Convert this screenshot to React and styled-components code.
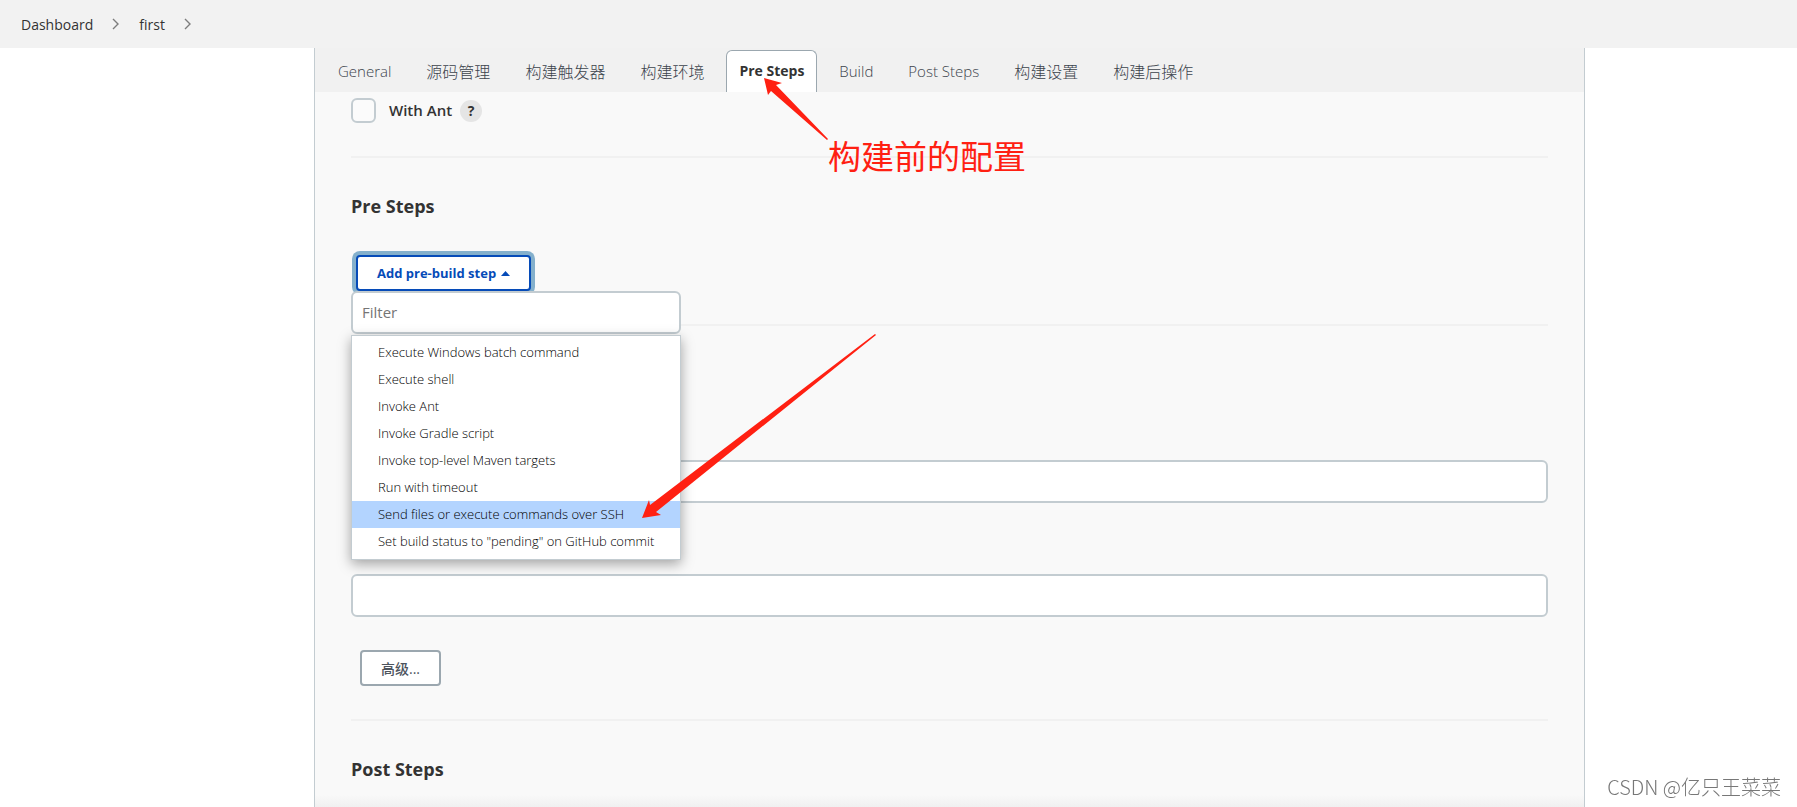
import React, { useState } from "react";
import styled, { createGlobalStyle } from "styled-components";

const GlobalStyle = createGlobalStyle`
  *, *::before, *::after {
    box-sizing: border-box;
  }

  body {
    margin: 0;
    background: #fff;
    color: #333;
    font-family: "Open Sans", "Noto Sans CJK SC", sans-serif;
    font-size: 15px;
  }

  button, input {
    font-family: inherit;
  }
`;

const Breadcrumbs = styled.nav`
  display: flex;
  align-items: center;
  gap: 17px;
  height: 48px;
  padding: 0 21px;
  background: #f2f2f2;
`;

const Crumb = styled.a`
  color: #333;
  font-size: 14px;
  font-weight: 500;
  text-decoration: none;
`;

const Chevron = styled.svg`
  width: 12px;
  height: 12px;
  fill: none;
  stroke: #7d7d7d;
  stroke-width: 1.4;
`;

const Panel = styled.main`
  position: relative;
  display: flex;
  flex-direction: column;
  min-height: calc(100vh - 48px);
  margin: 0 212px 0 314px;
  border: 1px solid #c3ccd1;
  border-width: 0 1px;
  background: #f9f9f9;
`;

const TabBar = styled.div`
  display: flex;
  align-items: flex-end;
  gap: 9px;
  height: 44px;
  padding: 0 10px;
  background: #f1f1f1;
`;

const Tab = styled.button`
  height: 42px;
  padding: 0 12px 2px;
  border: 1px solid ${(props) => (props.$active ? "#9ba7af" : "transparent")};
  border-bottom: 0;
  border-radius: 6px 6px 0 0;
  background: ${(props) => (props.$active ? "#fff" : "transparent")};
  color: ${(props) => (props.$active ? "#333" : "#3c434c")};
  font-size: ${(props) => (props.$cjk ? 16 : props.$active ? 14 : 15)}px;
  font-weight: ${(props) => (props.$active ? 700 : 300)};
  white-space: nowrap;
`;

const Section = styled.section`
  margin: 0 36px;
  padding: ${(props) => props.$top || 34}px 0 33px;
  border-bottom: 2px solid #f1f1f1;

  &:last-of-type {
    border-bottom: 0;
    padding-bottom: 0;
  }
`;

const CheckRow = styled.div`
  display: flex;
  align-items: center;
  height: 25px;
`;

const Checkbox = styled.input`
  appearance: none;
  width: 25px;
  height: 25px;
  margin: 0 13px 0 0;
  border: 2px solid #c3ccd1;
  border-radius: 6px;
  background: #fbfbfb;
`;

const CheckLabel = styled.label`
  padding-bottom: 2px;
  font-size: 15px;
  font-weight: 600;
`;

const Help = styled.button`
  width: 22px;
  height: 22px;
  margin-left: 8px;
  padding: 0;
  border: 0;
  border-radius: 50%;
  background: #e5e5e5;
  color: #333;
  font-size: 14px;
  font-weight: 700;
  line-height: 22px;
`;

const Title = styled.h2`
  margin: 0;
  font-size: 18px;
  font-weight: 700;
  line-height: 28px;
`;

const StepPicker = styled.div`
  position: relative;
  margin-top: 35px;
`;

const StepButton = styled.button`
  display: flex;
  align-items: center;
  gap: 5px;
  height: 36px;
  margin-left: 5px;
  padding: 0 19px;
  border: 2px solid #064bb8;
  border-radius: 4px;
  background: #fff;
  box-shadow: 0 0 0 4px #84b0cc;
  color: #064bb8;
  font-size: 13px;
  font-weight: 700;
`;

const Caret = styled.svg`
  width: 9px;
  height: 5px;
  fill: currentColor;
`;

const Dropdown = styled.div`
  position: absolute;
  top: 100%;
  left: 0;
  z-index: 2;
  width: 330px;
`;

const TextInput = styled.input`
  display: block;
  width: 100%;
  height: 43px;
  padding: 0 9px 2px;
  border: 2px solid #c3ccd1;
  border-radius: 6px;
  background: #fff;
  color: #333;
  font-size: 15px;

  &::placeholder {
    color: #757575;
  }
`;

const Menu = styled.ul`
  position: relative;
  margin: 1px 0 0;
  padding: 3px 0 4px;
  border: 1px solid #c3ccd1;
  background: #fff;
  box-shadow: 0 4px 12px rgba(0, 0, 0, 0.35);
  list-style: none;
`;

const MenuItem = styled.button`
  display: block;
  width: 100%;
  height: 27px;
  padding: 0 26px 2px;
  border: 0;
  background: ${(props) => (props.$selected ? "#b3d4ff" : "transparent")};
  color: #000;
  font-size: 13px;
  font-weight: 300;
  text-align: left;
  white-space: nowrap;
`;

const Fields = styled.div`
  display: flex;
  flex-direction: column;
  gap: 71px;
`;

const AdvancedButton = styled.button`
  height: 36px;
  margin: 33px 0 0 9px;
  padding: 0 19px;
  border: 2px solid #9ba7af;
  border-radius: 4px;
  background: #fff;
  color: #4d545d;
  font-size: 14px;
  font-weight: 500;
`;

const BottomShade = styled.div`
  position: sticky;
  bottom: 0;
  height: 12px;
  margin-top: auto;
  background: linear-gradient(rgba(240, 240, 240, 0), #f0f0f0);
`;

const Note = styled.p`
  position: absolute;
  top: 85px;
  left: 513px;
  z-index: 3;
  margin: 0;
  color: #ff2012;
  font-size: 33px;
  font-weight: 400;
  line-height: 48px;
  white-space: nowrap;
`;

const Arrows = styled.svg`
  position: absolute;
  top: 0;
  left: 0;
  z-index: 3;
  width: 600px;
  height: 500px;
  fill: #ff2012;
  pointer-events: none;
`;

const Watermark = styled.div`
  position: fixed;
  right: 16px;
  bottom: 5px;
  color: #777;
  font-family: "Noto Sans CJK SC", sans-serif;
  font-size: 20px;
  font-weight: 300;
  line-height: 30px;
`;

const tabs = [
  { name: "General" },
  { name: "源码管理", cjk: true },
  { name: "构建触发器", cjk: true },
  { name: "构建环境", cjk: true },
  { name: "Pre Steps" },
  { name: "Build" },
  { name: "Post Steps" },
  { name: "构建设置", cjk: true },
  { name: "构建后操作", cjk: true },
];

const steps = [
  "Execute Windows batch command",
  "Execute shell",
  "Invoke Ant",
  "Invoke Gradle script",
  "Invoke top-level Maven targets",
  "Run with timeout",
  "Send files or execute commands over SSH",
  'Set build status to "pending" on GitHub commit',
];

const CrumbArrow = () => (
  <Chevron viewBox="0 0 12 12" aria-hidden="true">
    <path d="M3 1l5 5-5 5" />
  </Chevron>
);

const App = () => {
  const [tab, setTab] = useState("Pre Steps");
  const [step, setStep] = useState(steps[6]);

  return (
    <>
      <GlobalStyle />
      <Breadcrumbs>
        <Crumb href="#dashboard">Dashboard</Crumb>
        <CrumbArrow />
        <Crumb href="#first">first</Crumb>
        <CrumbArrow />
      </Breadcrumbs>

      <Panel>
        <TabBar role="tablist">
          {tabs.map((item) => (
            <Tab
              key={item.name}
              role="tab"
              aria-selected={item.name === tab}
              $active={item.name === tab}
              $cjk={item.cjk}
              onClick={() => setTab(item.name)}
            >
              {item.name}
            </Tab>
          ))}
        </TabBar>

        <Section $top={6}>
          <CheckRow>
            <Checkbox type="checkbox" id="with-ant" />
            <CheckLabel htmlFor="with-ant">With Ant</CheckLabel>
            <Help type="button">?</Help>
          </CheckRow>
        </Section>

        <Section>
          <Title>Pre Steps</Title>
          <StepPicker>
            <StepButton type="button" aria-expanded="true">
              Add pre-build step
              <Caret viewBox="0 0 9 5" aria-hidden="true">
                <path d="M0 5l4.5-5L9 5z" />
              </Caret>
            </StepButton>
            <Dropdown>
              <TextInput type="text" placeholder="Filter" aria-label="Filter" />
              <Menu>
                {steps.map((name) => (
                  <li key={name}>
                    <MenuItem
                      type="button"
                      $selected={name === step}
                      onMouseEnter={() => setStep(name)}
                    >
                      {name}
                    </MenuItem>
                  </li>
                ))}
              </Menu>
            </Dropdown>
          </StepPicker>
        </Section>

        <Section $top={134}>
          <Fields>
            <TextInput type="text" aria-label="Root POM" />
            <TextInput type="text" aria-label="Goals and options" />
          </Fields>
          <AdvancedButton type="button">高级...</AdvancedButton>
        </Section>

        <Section>
          <Title>Post Steps</Title>
        </Section>

        <BottomShade />

        <Note>构建前的配置</Note>
        <Arrows viewBox="0 0 600 500" aria-hidden="true">
          <path d="M449 30L467 35 461 37 513 91 512 92 456 43 453 47z" />
          <path d="M327 470L334 452 335 457 560 286 561 287 341 464 346 467z" />
        </Arrows>
      </Panel>

      <Watermark>CSDN @亿只王菜菜</Watermark>
    </>
  );
};

export default App;
